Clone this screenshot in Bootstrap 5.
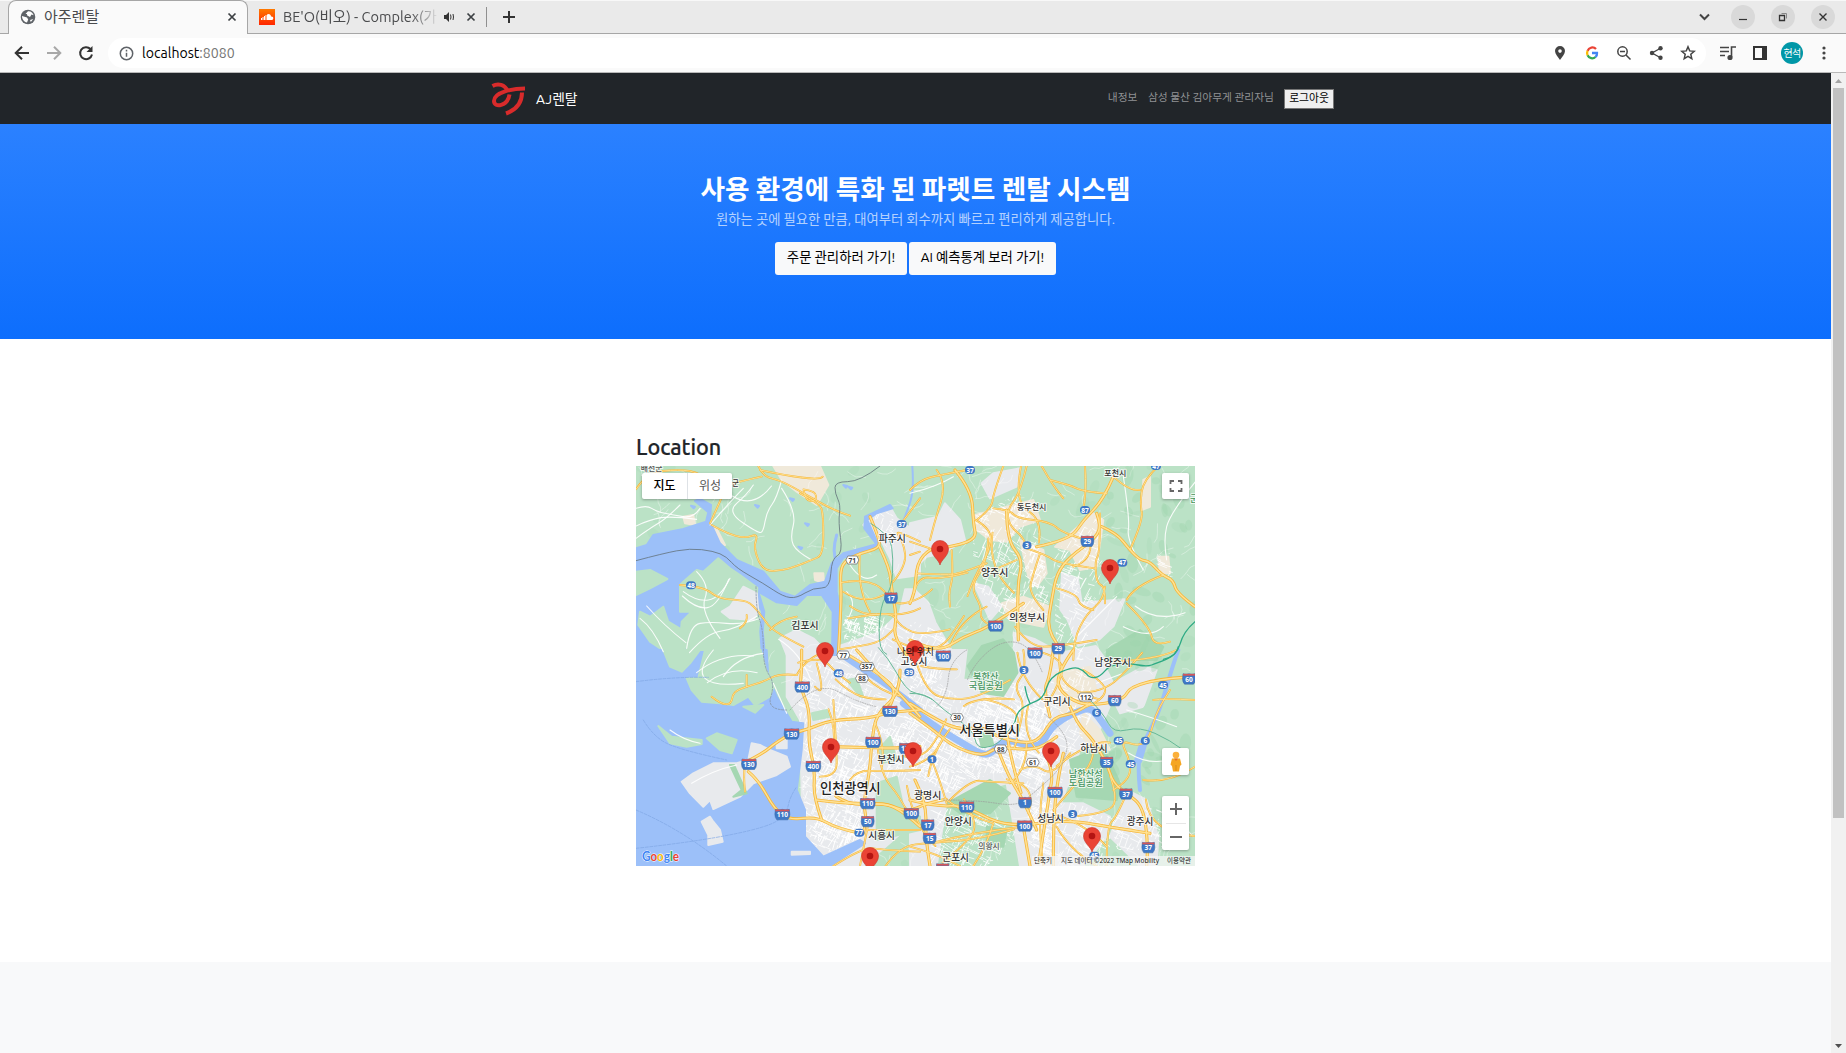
<!DOCTYPE html>
<html lang="ko">
<head>
<meta charset="utf-8">
<title>아주렌탈</title>
<link href="https://cdn.jsdelivr.net/npm/bootstrap@5.3.0/dist/css/bootstrap.min.css" rel="stylesheet">
<style>
html,body{height:100%;overflow:hidden}
body{font-family:Ubuntu,"Noto Sans","Noto Sans CJK KR",sans-serif;font-size:14.4px;line-height:1.5;color:#212529}
svg{display:block;flex:none}
svg text{font-family:"Noto Sans","Noto Sans CJK KR",sans-serif}
.window-frame{height:1053px}
.tabstrip{height:34px;background:#eaeaea;border-top:1px solid #f8f8f8;border-bottom:1px solid #a6a6a6;font-size:14.5px;color:#4a4b4d}
.tab-on{width:240px;height:34px;margin:-1px 0 0 8px;background:#fafafa;border:1px solid #a6a6a6;border-bottom:0;border-radius:8px 8px 0 0;padding:0 7px 0 11px;position:relative;z-index:1}
.tab-on span{margin-left:8px;font-size:15px}
.tab-off{width:239px;padding-left:11px;height:20px;border-right:1px solid #909090;padding-right:3px}
.tab-off,.tab-on{white-space:nowrap}
.tab-title{width:156px;margin-left:8px;overflow:hidden;-webkit-mask-image:linear-gradient(90deg,#000 82%,transparent 100%)}
.winbtn{width:24px;height:24px;border-radius:50%;background:#d9d9d9}
.toolbar{height:39px;background:#fafafa;border-bottom:1px solid #b9b9b9}
.omnibox{width:1598px;height:30px;margin-left:11px;background:#fff;border-radius:15px;padding:0 10px 0 11px}
.url{font-size:14.1px;line-height:20px;color:#000;margin-left:8px}
.url span{color:#757575}
.avatar-dot{width:22px;height:22px;border-radius:50%;background:#0097a7;color:#fff;font-size:10px;letter-spacing:-.8px}
.viewport{height:980px}
.topnav{height:51px;background:#212529;padding:0 497px 0 490px}
.brandname{font-size:13.8px;line-height:20px;color:#fff;margin-left:9px}
.navtext{font-size:10.75px;line-height:16px;color:#909294;padding-bottom:3px}
.logout{font-size:10.8px;font-weight:400;line-height:1;width:50px;height:20px;background:#efefef;border:1px solid #767676;color:#000;padding:0}
.hero{height:215px;background:linear-gradient(#2b81ff,#0d6efd);padding-top:47px}
.hero h1{font-size:26.65px;line-height:36px;font-weight:700;margin:0}
.hero p{font-size:13.33px;line-height:22px;margin:2px 0 11px;color:rgba(255,255,255,.68)}
.herobtn{height:33px;background:#f8f9fa;color:#000;border:0;border-radius:3px;font-size:13.4px;line-height:32px;padding:0}
.white-part{height:623px;padding-top:93px}
.mapcol{width:559px}
.mapcol h2{font-size:21.6px;line-height:31px;font-weight:500;margin:0 0 3px;-webkit-text-stroke:.2px #212529}
.mapbox{width:559px;height:400px;position:relative;overflow:hidden}
.ctl{position:absolute;background:#fff;border-radius:2px;box-shadow:0 1px 3px rgba(0,0,0,.3)}
.ctl-type{left:6px;top:7px;width:90px;height:26px;font-family:Roboto,"Noto Sans CJK KR",sans-serif;font-size:12px}
.type-on{font-weight:500;color:#000}
.type-off{color:#565656}
.ctl-full{right:6px;top:7px;width:27px;height:26px}
.ctl-peg{right:6px;top:282px;width:27px;height:27px}
.ctl-zoom{right:6px;top:330px;width:27px;height:54px}
.sbar{width:15px;background:#f1f1f1}
.sthumb{width:11px;height:730px;background:#c1c1c1}
</style>
<script src="https://cdn.jsdelivr.net/npm/bootstrap@5.3.0/dist/js/bootstrap.bundle.min.js"></script>
</head>
<body>
<div class="window-frame d-flex flex-column">
  <div class="tabstrip d-flex align-items-center">
    <div class="tab-on d-flex align-items-center">
      <svg width="16" height="16" viewBox="0 0 16 16"><circle cx="8" cy="8" r="7.3" fill="#5f6368"/><path d="M8 2.300c2.800-.3 5 1.700 5.600 4L11.500 5.600 10 8 7.200 6.600 7 5 5.500 5zM2 7l5 1.400 1.200 2L7 13.500C4 13 2 10.300 2 7m8 4 3.300-1-2.500 3z" fill="#fff"/></svg>
      <span class="me-auto">아주렌탈</span>
      <svg width="16" height="16" viewBox="0 0 16 16" stroke="#3c4043" stroke-width="1.7"><path d="m4.500 4.500 7 7m0-7-7 7"/></svg>
    </div>
    <div class="tab-off d-flex align-items-center">
      <svg width="16" height="16"><defs><linearGradient id="sc" x2="0" y2="1"><stop stop-color="#ff7a00"/><stop offset="1" stop-color="#ff2500"/></linearGradient></defs><path fill="url(#sc)" d="M0 0h16v16H0z"/><path d="M2.500 9v2m1.500-3v3m1.500-4v4M7 6v5" stroke="#fff"/><path d="M8 11V5.500c2-1.300 4 0 4 2 3-.6 3 3.500.5 3.500z" fill="#fff"/></svg>
      <span class="tab-title">BE'O(비오) - Complex(가</span>
      <svg class="ms-1" width="12" height="12" viewBox="0 0 12 12"><path d="M1 4h2l3-3v10L3 8H1z" fill="#333"/><path d="M7.500 3.500q1 2.500 0 5M10 3q1 3 0 6" fill="none" stroke="#333"/></svg>
      <svg class="ms-auto me-1" width="16" height="16" viewBox="0 0 16 16" stroke="#3c4043" stroke-width="1.700"><path d="m4.500 4.500 7 7m0-7-7 7"/></svg>
    </div>
    <svg style="margin-left:14px" width="16" height="16" stroke="#333" stroke-width="2"><path d="M2 8h12M8 2v12"/></svg>
    <div class="ms-auto d-flex align-items-center" style="padding-right:11px;gap:16px">
      <svg style="margin-right:4px" width="14" height="14" fill="none" stroke="#444" stroke-width="2"><path d="m3 4.500 4.500 4.500 4.500-4.500"/></svg>
      <div class="winbtn d-flex align-items-center justify-content-center"><svg width="12" height="12"><path d="M2 8.500h8" stroke="#333" stroke-width="1.200"/></svg></div>
      <div class="winbtn d-flex align-items-center justify-content-center"><svg width="12" height="12" fill="none" stroke="#333"><path d="M2.500 4.500h5v5h-5z" stroke-width="1.300"/><path d="M4.500 2.500h5v5" stroke="#888"/></svg></div>
      <div class="winbtn d-flex align-items-center justify-content-center"><svg width="12" height="12" stroke="#333" stroke-width="1.400"><path d="m2.500 2.500 7 7m0-7-7 7"/></svg></div>
    </div>
  </div>
  <div class="toolbar d-flex align-items-center">
    <svg width="97" height="20" viewBox="-1 0 97 20" fill="none" stroke="#333" stroke-width="2"><path d="M28 10H15m6-6.300L14.700 10l6.300 6.300"/><path d="M46 10h13m-6-6.300 6.300 6.300-6.300 6.300" stroke="#a8a8a8"/><path d="M89.500 6A6 6 0 1 0 91 11.500"/><path d="M91.500 3v6h-6z" fill="#333" stroke="none"/></svg>
    <div class="omnibox d-flex align-items-center">
      <svg width="15" height="15" fill="none" stroke="#5f6368" stroke-width="1.500"><circle cx="7.500" cy="7.500" r="6.200"/><path d="M7.500 6.700v4M7.500 3.800v1.600"/></svg>
      <div class="url">localhost<span>:8080</span></div>
      <div class="ms-auto d-flex" style="gap:16px">
        <svg width="16" height="16"><path d="M8 1a5 5 0 0 0-5 5c0 3 3 6 5 9 2-3 5-6 5-9a5 5 0 0 0-5-5m0 3.300a1.800 1.800 0 1 1 0 3.600 1.800 1.800 0 0 1 0-3.600" fill="#444" fill-rule="evenodd"/></svg>
        <svg width="16" height="16" fill="none" stroke-width="2.300"><path d="M12 4A5 5 0 0 0 3.600 5.800" stroke="#ea4335"/><path d="M3.600 5.800a5 5 0 0 0 0 4.500" stroke="#fbbc05"/><path d="M3.600 10.300A5 5 0 0 0 11.500 12" stroke="#34a853"/><path d="M11.500 12A5 5 0 0 0 13 8H8" stroke="#4285f4"/></svg>
        <svg width="16" height="16" fill="none" stroke="#444" stroke-width="1.500"><circle cx="6.500" cy="6.500" r="4.700"/><path d="m10 10 4.500 4.500M4 6.500h5"/></svg>
        <svg width="16" height="16" stroke="#444" stroke-width="1.400"><path d="M13 3 4 8l9 5" fill="none"/><g fill="#444" stroke="none"><circle cx="12.500" cy="3.300" r="2.200"/><circle cx="4" cy="8" r="2.200"/><circle cx="12.500" cy="12.700" r="2.200"/></g></svg>
        <svg width="16" height="16" fill="none" stroke="#444" stroke-width="1.500"><path d="m8 1.800 1.700 4.100 4.500.4-3.400 3 1 4.400L8 11.400l-3.800 2.300 1-4.400-3.400-3 4.500-.4z"/></svg>
      </div>
    </div>
    <div class="d-flex align-items-center" style="margin-left:13px">
      <svg width="17" height="16" fill="none" stroke="#444" stroke-width="1.600"><path d="M1 2.500h9M1 6.500h9M1 10.500h5M12.500 12V2H17"/><circle cx="11" cy="12.500" r="1.800" fill="#444"/></svg>
      <svg style="margin-left:17px" width="14" height="14"><path d="M0 0h14v14H0zM2 2v10h7V2z" fill="#333" fill-rule="evenodd"/></svg>
      <div class="avatar-dot d-flex align-items-center justify-content-center" style="margin-left:14px">현석</div>
      <svg style="margin-left:18px" width="6" height="16" fill="#444"><circle cx="3" cy="3" r="1.600"/><circle cx="3" cy="8" r="1.600"/><circle cx="3" cy="13" r="1.600"/></svg>
    </div>
  </div>
  <div class="viewport d-flex">
    <div class="flex-grow-1 d-flex flex-column">
      <nav class="topnav d-flex align-items-center">
        <svg width="37" height="36" viewBox="0 0 37 36" fill="none" stroke="#d92b2b" stroke-width="4"><path d="M2.500 5C8 2 15 3.500 17.500 10M35 7.500C23 7.500 4 11 4 20 4 27.500 18 25 19.500 13.500M32 11.500c0 10-5 17-16 21"/></svg>
        <span class="brandname">AJ렌탈</span>
        <span class="navtext ms-auto">내정보</span>
        <span class="navtext" style="margin-left:10.500px">삼성 물산 김아무게 관리자님</span>
        <button class="logout" style="margin-left:10px">로그아웃</button>
      </nav>
      <header class="hero text-center text-white">
        <h1>사용 환경에 특화 된 파렛트 렌탈 시스템</h1>
        <p>원하는 곳에 필요한 만큼, 대여부터 회수까지 빠르고 편리하게 제공합니다.</p>
        <div class="d-flex justify-content-center" style="gap:2px">
          <a class="btn herobtn" style="width:132px">주문 관리하러 가기!</a>
          <a class="btn herobtn" style="width:147px">AI 예측통계 보러 가기!</a>
        </div>
      </header>
      <main class="white-part d-flex justify-content-center bg-white">
        <div class="mapcol">
          <h2>Location</h2>
          <div class="mapbox">
            <svg id="map" width="559" height="400" viewBox="636 466 559 400"></svg>
            <div class="ctl ctl-type d-flex align-items-center">
              <div class="type-on w-50 text-center">지도</div><div class="type-off w-50 h-100 text-center border-start d-flex align-items-center justify-content-center">위성</div>
            </div>
            <div class="ctl ctl-full d-flex align-items-center justify-content-center"><svg width="14" height="14" fill="none" stroke="#666" stroke-width="1.800"><path d="M1.500 5V2H5m4 0h3.500v3m0 4v3H9m-4 0H1.500V9"/></svg></div>
            <div class="ctl ctl-peg d-flex align-items-center justify-content-center"><svg width="14" height="22"><circle cx="7" cy="4" r="3.300" fill="#fbb03b"/><path d="M3 7.500h8l1.500 6-1.500 1.500-1 5.500H4L3 15l-1.500-1.500z" fill="#f5a623"/><path d="m5 7.500 2 2.500 2-2.500z" fill="#e5702a"/><path d="M7 14v6" stroke="#d98b1c"/></svg></div>
            <div class="ctl ctl-zoom"><svg width="27" height="54" fill="none" stroke="#666" stroke-width="2"><path d="M8 13h12M14 7v12M8 41h12"/><path d="M4 27.500h20" stroke="#e6e6e6" stroke-width="1"/></svg></div>
          </div>
        </div>
      </main>
      <div class="flex-grow-1 bg-light"></div>
    </div>
    <div class="sbar d-flex flex-column align-items-center">
      <svg width="15" height="15" fill="#a3a3a3"><path d="m4 10 3.500-4 3.500 4z"/></svg>
      <div class="sthumb"></div>
      <svg class="mt-auto" width="15" height="15" fill="#505050"><path d="m4 6 3.500 4L11 6z"/></svg>
    </div>
  </div>
</div>
<script>
// Tiles A-D cover a quarter of the map each; M covers the whole map. Values: origin x, origin y, scale x, scale y.
const origin={A:[630,425,3,3],B:[910,460,3,3],C:[630,650,3,3],D:[910,650,3,3],M:[636,466,2.805,3]};
const out=[];
let seed=7;const rnd=()=>(seed=(seed*16807)%2147483647)/2147483647;
const pts=(t,s)=>s.trim().split(/\s+/).map(p=>{const[a,b]=p.split(',').map(Number);return[origin[t][0]+a/origin[t][2],origin[t][1]+b/origin[t][3]]});
const P=(t,s)=>pts(t,s).map(p=>p[0].toFixed(1)+' '+p[1].toFixed(1)).join('L');
// Rounds the corners of a polyline by running quadratic curves between segment midpoints.
const S=(t,s)=>{const a=pts(t,s);let d='M'+a[0];for(let i=1;i<a.length-1;i++){d+='Q'+a[i]+' '+(i==a.length-2?a[i+1]:[(a[i][0]+a[i+1][0])/2,(a[i][1]+a[i+1][1])/2])}return a.length<3?d+'L'+a[1]:d};
const area=(t,c,s)=>out.push(`<path d="M${P(t,s)}Z" fill="${c}" stroke="${c}" stroke-width="2" stroke-linejoin="round"/>`);
const W='#9cc0f9',G='#bbe2c6',U='#e8eaed',T='#f0e9da',K='#a5d7b2';
out.push(`<rect x="636" y="466" width="559" height="400" fill="${G}"/>`);
for(let i=0;i<170;i++){const x=636+rnd()*559,y=466+rnd()*400;out.push(`<ellipse cx="${x}" cy="${y}" rx="${3+rnd()*9}" ry="${2+rnd()*4}" fill="#a9d9b6" opacity=".32" transform="rotate(${rnd()*180} ${x} ${y})"/>`)}
// urban land
area('A',U,'720,270 780,245 800,280 870,330 870,450 800,460 780,400 755,350 700,300');
area('A',U,'450,640 500,615 550,640 600,690 470,690');
area('M',U,'740,440 755,370 780,370 820,410 840,470 900,580 900,660 860,720 700,720 590,600 570,540 680,500');
area('A',T,'430,123 570,123 595,180 560,240 500,200 455,165');
area('A',T,'228,298 262,315 285,360 250,352');area('A',T,'160,275 190,270 195,300 165,295');area('A',T,'553,445 580,445 582,475 555,465');
area('B',U,'0,190 40,180 85,170 105,130 150,180 165,240 100,280 50,290 0,340');
area('B',U,'215,70 250,40 330,25 320,80 240,115');
area('B',U,'190,370 235,380 275,440 240,480 205,400');
area('M',U,'1195,320 1240,340 1250,410 1370,400 1340,480 1300,520 1240,540 1210,460 1190,430');
area('M',U,'1060,500 1120,520 1190,560 1290,540 1330,600 1240,640 1180,700 1100,720 1060,640');
area('B',T,'195,165 310,135 370,120 390,180 330,200 290,245 240,240 200,210');area('B',T,'330,240 400,270 410,340 380,380 355,350');
area('B',T,'275,430 340,410 420,440 400,500 300,480');area('B',T,'435,260 550,160 580,180 560,320 510,330 480,270');area('B',T,'700,60 720,50 720,140 695,150');area('B',T,'745,290 775,290 780,340 750,340');
area('C',U,'470,0 870,0 870,500 700,648 520,648 510,210 470,140');
area('D',U,'0,0 170,0 160,90 300,80 400,20 590,60 620,120 560,260 510,300 450,470 420,648 330,648 290,400 110,450 80,648 0,648');
area('D',U,'590,110 700,50 740,60 700,170 630,190');area('D',U,'650,420 710,450 745,560 740,648 690,648 600,560');area('D',U,'380,460 520,460 600,500 590,560 520,648 390,648');
area('D',T,'430,70 540,50 560,120 520,180 450,190');area('D',T,'520,190 570,240 600,300 540,290 510,250');
// country lanes
let cl='';for(let i=0;i<330;i++){let x=636+rnd()*559,y=466+rnd()*400;cl+=`M${x.toFixed(1)} ${y.toFixed(1)}`;let a=rnd()*6.3;for(let j=0;j<4;j++){a+=rnd()*1.4-.7;cl+=`l${(Math.cos(a)*5).toFixed(1)} ${(Math.sin(a)*5).toFixed(1)}`}}
out.push(`<path d="${cl}" fill="none" stroke="#fff" stroke-opacity=".6" stroke-width=".6"/>`);
// streets over the built-up districts
const city=(id,list)=>out.push(`<defs><clipPath id="${id}">`+list.map(a=>`<path d="M${P(...a)}Z"/>`).join('')+'</clipPath></defs>');
city('city',[['C','500,50 870,0 870,390 740,400 700,560 610,610 530,590 520,440'],['D','0,130 100,100 160,160 300,90 400,120 520,160 500,300 440,430 380,440 300,370 210,370 110,430 0,370'],['M','580,450 680,440 860,540 860,640 700,720 590,600'],['B','190,170 330,100 400,250 420,480 290,480 190,370'],['B','430,280 560,170 580,300 520,600 440,600'],['D','350,450 500,460 600,500 600,648 360,648'],['D','420,80 520,50 560,150 510,290 440,200'],['B','0,480 100,520 120,600 0,600'],['D','60,480 230,470 330,560 230,648 60,648'],['D','600,500 740,470 760,600 620,600'],['B','740,280 780,280 790,350 740,350'],['A','280,550 350,490 385,520 370,580'],['A','730,260 790,260 790,380 750,350']]);
city('core',[['D','0,200 100,260 200,320 300,300 420,290 400,400 340,370 240,370 120,430 0,360'],['D','150,230 220,150 320,170 420,120 420,240 340,260 260,270 200,280'],['C','540,560 560,500 700,470 700,560 610,600'],['C','545,310 600,300 700,300 710,370 660,430 560,440'],['C','760,240 870,200 870,330 800,340'],['D','0,0 100,0 90,90 0,120'],['C','600,120 720,170 720,200 600,200'],['D','350,480 440,440 430,640 380,640'],['B','360,250 400,280 400,360 360,390'],['B','310,120 345,150 345,220 315,200'],['M','585,460 625,450 630,510 585,515'],['M','640,455 680,450 680,500 640,510']]);
const streets=(n,clip,w)=>{let st='';for(let i=0;i<n;i++){let x=636+rnd()*559,y=466+rnd()*400,a=(rnd()<.5?.25:1.8)+rnd()*.4,l=3+rnd()*11;st+=`M${x.toFixed(1)} ${y.toFixed(1)}l${(Math.cos(a)*l).toFixed(1)} ${(Math.sin(a)*l).toFixed(1)}`}
out.push(`<path clip-path="url(#${clip})" d="${st}" stroke="#fff" stroke-width="${w}" fill="none"/>`)};
streets(6200,'city',.8);streets(9000,'core',1);
// parks
[['M','930,600 970,540 1030,520 1060,560 1070,620 1030,690 970,680'],['D','480,330 580,290 630,400 620,450 500,440'],['D','205,250 240,245 250,285 215,290'],['C','545,190 590,180 600,200 550,210'],['C','650,90 680,85 700,140 690,140'],['C','740,400 800,380 820,470 870,500 870,540 740,570'],['D','110,460 240,390 300,430 240,490 150,490'],['D','230,530 290,540 280,590 230,590'],['B','590,570 690,510 760,560 740,600 590,600'],['C','745,300 780,260 800,330 750,340']].forEach(a=>area(a[0],a[0]=='C'?G:K,a[1]));
area('D',G,'745,120 855,60 855,480 720,450 640,380 620,280');
for(let i=0;i<45;i++){const x=1110+rnd()*85,y=466+rnd()*330;out.push(`<ellipse cx="${x}" cy="${y}" rx="${3+rnd()*8}" ry="${2+rnd()*4}" fill="#9dd3ad" opacity=".35" transform="rotate(${rnd()*180} ${x} ${y})"/>`)}
// sea and rivers
area('A',W,'18,370 50,360 70,330 160,312 228,290 235,262 195,228 210,222 243,240 240,290 270,355 320,405 400,440 450,500 495,515 540,480 585,470 605,415 640,385 740,358 703,310 705,275 780,240 788,250 740,265 712,285 748,365 640,398 620,430 620,500 630,560 622,640 625,690 606,690 608,560 575,510 530,510 500,540 440,532 385,500 403,560 398,620 405,690 18,690');
area('A',G,'18,440 60,435 112,462 60,490 18,510');area('A',G,'30,560 60,575 100,545 115,590 165,620 175,650 150,690 120,690 60,650 25,600');
area('A',G,'150,480 160,470 200,435 220,440 265,400 300,430 330,450 382,488 378,540 390,560 385,620 390,690 190,690 150,650 155,590 185,560 150,560');
area('A',U,'275,560 300,545 340,485 380,505 385,560 370,585 300,580');
area('C',W,'18,0 410,0 415,80 440,140 485,215 520,220 515,300 500,420 525,480 525,560 580,620 690,570 705,580 600,648 18,648');
area('C',G,'100,0 120,50 155,65 180,40 210,0 392,0 408,60 432,105 420,140 375,165 355,140 310,165 270,160 215,155 185,120 170,85 205,85 225,0');
area('C',G,'85,228 125,260 215,270 215,282 170,290 120,280');area('C',G,'230,265 260,250 320,270 305,310 270,300');area('C',G,'340,170 400,165 375,188');
area('C',U,'155,395 190,370 250,340 320,340 355,330 365,280 390,285 420,300 470,320 480,350 440,375 370,400 330,440 250,477 240,450 220,470 180,430');
area('C',U,'440,275 470,265 470,295 440,295');area('C',U,'215,515 240,500 250,515 270,540 278,575 235,585 235,555');area('C',K,'300,345 312,345 350,430 310,440 335,420');
area('C',U,'485,605 540,605 540,612 485,614');
const line=(t,c,w,s,x='')=>out.push(`<path d="${S(t,s)}" fill="none" stroke="${c}" stroke-width="${w}" stroke-linejoin="round" stroke-linecap="round" ${x}/>`);
line('M',W,2,'775,0 780,70 760,140 745,175');
line('C',W,6,'600,-10 700,60 780,110 870,180');
line('D',W,7,'-20,160 0,175 90,240 150,275 215,315 245,310 285,265 360,290 395,285 430,220 530,170 560,190 600,250');
line('D',W,4,'805,0 790,40 750,180 710,260 680,330 690,420');line('D',W,8,'700,280 685,330');
line('A',W,3,'620,330 605,380 620,410');
[[183,242],[290,200],[525,295],[505,365],[375,240],[640,180],[480,220],[655,185]].forEach(p=>area('A',W,`${p[0]},${p[1]} ${p[0]+12},${p[1]+3} ${p[0]+8},${p[1]+8}`));
// minor roads
[['A','18,250 50,240 80,260 130,270 190,280 210,250'],['A','18,340 60,310 110,280 150,240'],['A','455,165 440,220 410,260 400,320 385,325 290,260 350,210 370,180'],['A','455,190 500,260 480,340 500,380 545,405'],['A','240,300 300,230 340,190'],['A','160,500 200,530 270,520 300,460'],['A','170,670 180,600 240,590 340,600 390,580'],['A','200,440 240,480 210,560 270,640'],['A','30,580 70,610 100,680'],['A','660,420 700,480 740,450'],['A','650,500 690,540 640,600'],['B','0,100 80,80 130,50'],['B','640,50 660,180 650,240 700,330'],['B','860,60 780,160 760,240 770,300'],['B','620,410 560,470 490,540'],['B','640,500 720,540 760,500'],['C','250,0 200,60 250,110 340,100'],['C','280,80 320,20 400,10'],['C','120,240 160,270 210,280'],['C','430,100 470,190'],['C','185,400 250,360 320,345'],['D','650,180 720,200 800,230'],['D','560,100 640,70'],['D','740,480 800,500 850,560'],['M','0,180 40,160 100,150 170,160'],['M','130,390 170,430 230,420 260,340'],['M','150,560 200,500 280,490 340,450'],['M','170,620 240,560 330,570'],['M','200,650 260,600 340,620'],['M','400,520 460,560 490,640'],['M','30,420 80,480 140,530'],['M','270,90 330,130 380,60'],['M','1400,420 1460,470 1540,440'],['M','1380,860 1440,900 1500,880']].forEach(a=>line(a[0],'#fff',1.1,a[1],'stroke-opacity=".9"'));
// arterial roads; a third value marks an expressway
const roads=[['A','245,300 290,325 345,340 385,325 370,370 400,440 460,435 495,425 545,405 580,390 580,270 570,235 510,205'],['A','240,295 270,230 290,180 350,165 395,155'],['A','385,123 400,155 450,165 530,210 620,260 660,272'],['A','390,135 460,150 570,165 578,155'],['M','470,70 505,75 505,105 475,105 470,70'],['A','150,480 220,485 265,520 320,525 360,530 400,580 430,620 520,665'],['A','330,610 355,590 350,570'],['A','420,615 445,585 500,575'],['A','720,275 748,340 748,370 690,385 640,410 630,450 635,520 625,690',1],['A','748,365 780,430 785,500 800,570 790,640 830,690',1],['A','870,220 840,260 810,300'],['A','640,500 700,540 760,510'],['A','655,580 740,565 830,570 870,550'],['A','790,470 830,420 820,350 790,310 870,350'],['A','690,385 680,490 720,560'],['A','840,390 870,380'],
['B','0,90 30,60 90,45 170,30'],['B','80,30 110,70 75,180 60,240'],['B','135,30 185,90 190,190 200,240 100,265 60,265 20,310 15,400 0,430',1],['B','0,245 60,265'],['B','280,18 250,100 245,145 200,180'],['B','350,18 330,100 290,150 300,200 340,230 350,260'],['B','250,145 300,150 320,175 420,185 460,220 530,240'],['B','395,18 430,80 460,115'],['B','420,60 480,75 520,95 590,100'],['B','525,20 530,95 520,145'],['B','610,50 580,120 520,180 480,240 380,260',1],['B','560,160 575,200 550,240 480,290 440,340 425,420 410,510 440,550',1],['B','575,200 620,220 660,270 690,300 720,305 755,345 790,360 800,400 855,440',1],['B','570,160 570,280 555,300 560,370 585,380 585,430'],['B','745,18 700,60 690,130 700,180 660,270'],['B','610,50 660,95 690,90'],['B','235,235 230,310 180,380 215,440 210,480 240,495'],['B','290,150 290,240 340,300 320,380 325,540',1],['B','350,265 410,285 445,310 555,325'],['B','390,280 370,340 355,400 400,450'],['B','20,340 110,345 150,340 230,310'],['B','125,270 130,350 115,400 120,440'],['B','320,300 250,330'],['B','0,540 80,580 160,530 240,500 340,430',1],['B','120,560 150,480 230,440'],['B','315,500 360,560 440,560 560,540'],['B','585,380 580,420 530,460 490,540 490,600'],['B','650,420 670,380 760,345'],['B','650,430 720,500 730,560 780,545'],['B','440,385 500,400 510,440 550,450'],['B','540,240 550,300 490,320'],
['C','515,0 515,60 510,110 540,180 535,280 555,360 550,440 575,510',1],['C','485,250 530,240 600,210 720,205 780,185 870,180',1],['C','340,340 400,310 440,275 485,250',1],['C','345,340 340,380 345,425'],['C','355,365 385,390 435,480 480,510 560,500 620,535 690,550',1],['C','605,290 720,293 810,295 870,290',1],['C','680,0 760,90 810,130 870,200',1],['C','810,60 810,130 740,190 725,270 720,360 700,460 710,510 700,550',1],['C','560,450 640,460 720,460 800,465 870,530',1],['C','610,150 620,300 620,380 570,380'],['C','710,540 870,540'],['C','715,520 690,648'],['C','660,390 680,360 770,365 870,360'],['C','740,270 750,370 810,440 840,500'],['C','245,140 270,160 303,165 310,125 350,110 400,95 450,70 500,75'],['C','350,75 350,110'],['C','500,75 530,20 600,0'],['C','610,648 700,590 760,600 870,605'],['C','555,110 590,150 560,40'],
['D','0,160 80,210 150,240 220,230 260,260 340,280 390,270 430,200 500,190 540,160',1],['D','0,190 70,240 130,290 220,320 260,290 350,300 400,290 440,260',1],['D','20,40 50,130 130,150 210,140 300,90'],['D','340,0 350,60 310,110 350,170 320,260'],['D','430,0 420,80 400,120 420,200',1],['D','490,0 440,70 450,130 530,170 640,150 660,110 760,85 855,80',1],['D','520,60 590,100 580,150 530,170'],['D','480,170 500,220 550,270 590,340 610,400 650,430 700,470 715,590 710,648',1],['D','780,120 740,180 720,260 690,290 630,270 660,330 660,390 610,420'],['D','800,0 740,30 600,35'],['D','265,300 290,370 340,450 380,540',1],['D','460,310 440,400 430,530 430,648',1],['D','0,450 80,470 160,465 260,520 350,525 480,510 590,530 720,550',1],['D','120,450 180,390 240,395 340,400'],['D','110,450 180,500 250,520'],['D','15,390 50,460 45,560 60,648',1],['D','60,580 200,545 340,530'],['D','250,520 230,590 190,648'],['D','340,530 360,648',1],['D','400,400 380,520 400,648'],['D','430,480 500,400 550,330 550,300'],['D','330,360 370,340 430,380 480,310'],['D','350,280 350,360 300,400'],['D','650,430 620,500 590,530 590,648'],['D','700,390 780,400 855,350'],['D','730,150 760,145 855,150'],['D','440,530 480,600 560,648'],['D','0,590 80,610 150,648'],['D','60,320 80,360 110,460'],['D','100,260 75,330 0,350'],['D','590,590 540,530 430,490'],
['M','575,350 620,340 690,360 720,420 800,400 830,370'],['M','600,420 640,450 720,440 740,480 800,510 880,490'],['M','570,550 640,540 700,520 730,480'],['M','720,520 800,560 860,540 890,500 920,450'],['M','800,600 840,610 900,610'],['M','780,380 790,330 860,340 930,320'],['M','600,570 680,620 740,680 700,740',1],['M','640,630 690,680 740,690'],['M','560,640 600,680 660,700 700,700'],['M','455,590 520,570 560,620 600,650'],['M','540,730 560,780 555,860'],['M','670,770 700,840 690,900'],['M','560,990 600,1020 700,1010 760,1040 820,1010 870,1000',1],['M','745,870 800,880 850,810 870,760'],['M','760,960 780,1080 840,1140'],['M','700,1200 740,1140 830,1130 960,1120 1060,1090'],['M','860,1190 930,1130 960,1070 920,1000'],['M','980,700 1060,720 1080,790 1060,850'],['M','920,720 960,690 1060,700'],['M','1100,720 1080,800 1130,860'],['M','1150,860 1170,920 1160,980 1130,1190',1],['M','1180,900 1280,820 1330,830'],['M','1070,560 1080,640 1140,700'],['M','1140,560 1200,580 1190,650 1150,720'],['M','1190,540 1180,620 1230,680 1300,700'],['M','1240,680 1310,680 1390,600 1420,560'],['M','950,160 1000,190 990,260 950,330 930,390'],['M','1000,200 985,310 1060,380'],['M','1080,0 1060,110 1140,160 1130,230'],['M','0,70 30,20 120,10 180,20 230,60'],['M','1240,1050 1330,1040 1350,990 1330,930'],['M','1430,1000 1440,1100 1568,1110'],['M','1040,940 1130,960 1100,1040'],['M','880,790 830,860 820,930'],['M','1040,800 1050,880 1080,980',1]];
roads.forEach(r=>line(r[0],'#f6b73c',r[2]?3.1:1.9,r[1]));roads.forEach(r=>line(r[0],'#ffe294',r[2]?1.500:.9,r[1]));
// rail and borders
line('D','#2daa84',1.3,'315,215 320,185 360,160 400,145 420,80 490,50 520,60 540,85 570,80 600,45 660,40 710,50 740,40 800,15 805,-10');line('D','#2daa84',1.3,'345,110 350,140 360,160');line('B','#2daa84',1.3,'760,598 800,590 820,515 855,485');
line('D','#67b998',1,'0,130 50,130 100,180 190,240 200,295 250,290 280,265 315,215');line('D','#67b998',1,'540,150 580,190 610,250 690,230 780,270 820,300');line('A','#67b998',1,'722,295 780,330 790,400 785,490 750,540 745,680 770,688');
line('M','#67b998',1,'680,545 710,580 740,640 770,680 805,685 830,700');
line('A','#62717a',.8,'18,407 100,385 180,370 250,378 290,395 320,430 400,475 460,515 500,520 550,488 600,490 605,400 638,385 625,290 632,240 615,205 615,170 690,170 750,123');
line('C','#8794a8',.8,'378,-190 378,-120 400,-60 400,50 435,100 410,180 470,180','stroke-dasharray="2 1.500"');line('C','#7fa6e4',.7,'18,95 130,80 235,82','stroke-dasharray="3 1.500"');line('C','#7fa6e4',.7,'18,595 200,575 420,530 470,490 480,440 500,410','stroke-dasharray="3 1.500"');line('C','#7fa6e4',.7,'18,480 160,540 290,648','stroke-dasharray="3 1.500"');line('C','#7fa6e4',.7,'40,210 70,260 150,300 290,330','stroke-dasharray="3 1.500"');
line('D','#999',.7,'170,0 120,30 110,140 80,170','stroke-dasharray="1 1.500"');line('D','#999',.7,'100,450 200,450 320,470 370,430 460,350 480,250 400,190','stroke-dasharray="1 1.500"');line('C','#999',.7,'480,180 560,90 690,160 740,170','stroke-dasharray="1 1.500"');line('M','#999',.7,'930,640 950,590 1030,520 1110,540 1140,620','stroke-dasharray="1 1.500"');
// route shields: round for national roads, crest for expressways, white for local ones
const shield=(t,k,n,x,y)=>{x=origin[t][0]+x/3;y=origin[t][1]+y/3;const w=k=='r'?(n.length>1?10:9):n.length>2?14:12;
 if(k=='r')out.push(`<rect x="${x-w/2}" y="${y-4}" width="${w}" height="8" rx="4" fill="#3f78c6"/>`);
 else if(k=='e')out.push(`<path d="M${x-w/2} ${y-5}q${w/4} 1 ${w/2} 0q${w/4} 1 ${w/2} 0l.5 5q0 3.500-2 5.500h-${w-3}q-2-2-2-5.500z" fill="#3f78c6" stroke="#35659f" stroke-width=".5"/><path d="M${x-w/2} ${y-4.800}h${w}v1.800h-${w}z" fill="#d2575a"/>`);
 else out.push(`<path d="M${x-w/2+1.500} ${y-4}h${w-3}l2 4-2 4h-${w-3}l-2-4z" fill="#fff" stroke="#777" stroke-width=".8"/>`);
 out.push(`<text x="${x}" y="${y+(k=='e'?3.100:2.500)}" font-size="6.600" font-weight="700" text-anchor="middle" fill="${k=='w'?'#444':'#fff'}">${n}</text>`)};
`A r 48 183 481|A r 37 815 297|A w 71 667 405|A e 17 783 518|A w 77 640 690|B r 37 180 30|B r 47 738 18|B r 87 525 150|B r 3 351 256|B e 29 532 243|B r 47 637 308|B e 100 257 497|B e 100 375 578|B e 29 445 565|B e 100 100 587|C w 357 711 50|C w 88 696 85|C r 48 626 70|C r 39 838 67|C e 400 517 110|C e 130 780 183|C e 130 485 251|C e 130 357 342|C e 110 457 493|C e 400 550 348|C e 100 729 276|C e 120 830 295|C e 110 713 460|C e 50 713 514|C r 77 688 548|C e 100 844 490|D r 3 342 60|D w 30 141 203|D w 112 527 141|D e 60 614 151|D e 60 837 86|D r 45 759 105|D r 6 560 188|D r 45 626 272|D r 6 706 272|D r 45 662 342|D e 35 590 336|D w 88 272 297|D w 61 368 337|D r 1 66 328|D e 100 435 426|D e 37 648 431|D e 1 345 457|D e 110 170 470|D r 3 488 492|D e 17 53 524|D e 15 59 564|D e 100 344 527|D e 37 715 592|D r 45 553 617|D e 15 98 656`.split('|').forEach(s=>{const a=s.split(' ');shield(a[0],a[1],a[2],+a[3],+a[4])});
const pin=(x,y)=>out.push(`<path d="M${x} ${y+16}c-1-5-8.500-9-8.500-16a8.500 8.500 0 0 1 17 0c0 7-7.500 11-8.500 16z" fill="#ea4335" stroke="#c5362b" stroke-width=".6"/><circle cx="${x}" cy="${y}" r="3.300" fill="#b31412"/>`);
const label=(t,s,x,y,w,f=10,c='#333',b=500)=>out.push(`<text x="${origin[t][0]+x/3-w/6}" y="${origin[t][1]+y/3+f*.36}" textLength="${w/3}" lengthAdjust="spacingAndGlyphs" font-size="${f}" font-weight="${b}" fill="${c}" stroke="#fff" stroke-width="2" stroke-opacity=".8" stroke-linejoin="round" paint-order="stroke">${s}</text>`);
[['A','배천군',65,130,65,8,'#555'],['A','군',317,174,20,8],['A','파주시',787,340,82],['A','김포시',525,600,82],['B','포천시',616,38,66,8],['B','동두천시',365,140,88,8],['B','양주시',254,337,82],['B','의정부시',352,471,108],['B','군',852,116,24,9,'#43945d'],['D','고양시',12,33,80],['D','북한산',227,80,76,9,'#43945d'],['D','국립공원',227,107,102,9,'#43945d'],['D','남양주시',608,38,110],['D','구리시',441,154,82],['D','서울특별시',239,240,182,14,'#222'],['D','하남시',552,294,82],['D','남한산성',527,370,102,9,'#43945d'],['D','도립공원',527,398,102,9,'#43945d'],['C','부천시',783,328,82],['C','인천광역시',661,415,182,14,'#222'],['D','광명시',53,436,82],['C','시흥시',755,557,80],['D','안양시',145,514,82],['D','성남시',422,505,80],['D','의왕시',237,587,64,8,'#555'],['D','군포시',137,622,80],['D','광주시',690,514,80]].forEach(a=>label(...a));
[[940,549],[1110,568],[825,651],[915,649],[831,747],[913,751],[1051,751],[1092,836],[870,856]].forEach(p=>pin(...p));
out.push('<text x="897" y="654.500" font-size="9.500" textLength="37" lengthAdjust="spacingAndGlyphs" fill="#111">나의 위치</text>');
out.push('<path d="M1032 856h163v10h-163z" fill="#f5f5f5" opacity=".75"/>');
[['단축키',1034,18],['지도 데이터 ©2022 TMap Mobility',1061,98],['이용약관',1167,24]].forEach(a=>out.push(`<text x="${a[1]}" y="863" font-size="6.600" textLength="${a[2]}" lengthAdjust="spacingAndGlyphs" fill="#111">${a[0]}</text>`));
out.push('<text x="642" y="861" textLength="37" lengthAdjust="spacingAndGlyphs" style="font-family:Lato,sans-serif" font-size="12.500" font-weight="700" stroke="#fff" stroke-width=".9" paint-order="stroke"><tspan fill="#4285f4">G</tspan><tspan fill="#ea4335">o</tspan><tspan fill="#fbbc05">o</tspan><tspan fill="#4285f4">g</tspan><tspan fill="#34a853">l</tspan><tspan fill="#ea4335">e</tspan></text>');
document.getElementById('map').innerHTML=out.join('');
</script>
</body>
</html>
